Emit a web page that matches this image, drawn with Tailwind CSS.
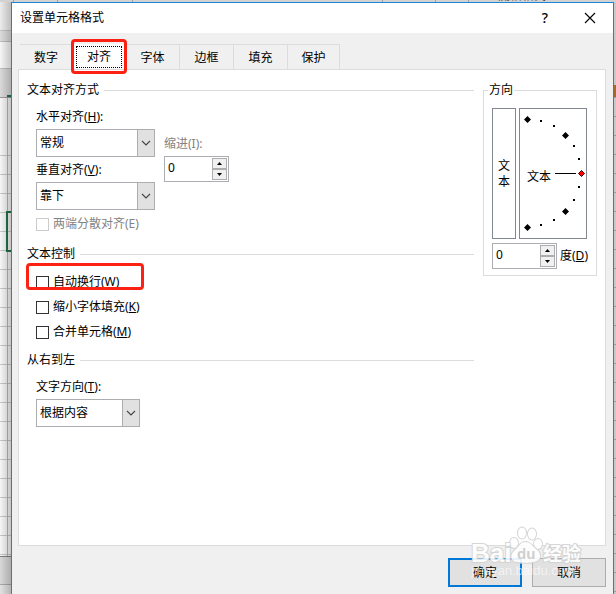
<!DOCTYPE html>
<html lang="zh-CN">
<head>
  <meta charset="UTF-8" />
  <meta name="viewport" content="width=device-width, initial-scale=1.0" />
  <title>设置单元格格式</title>
  <script src="https://cdn.jsdelivr.net/npm/@tailwindcss/browser@4"></script>
</head>
<body class="h-screen overflow-hidden flex flex-col bg-[#d2d2d2] text-black text-[12px] leading-5 font-['Noto_Sans','Noto_Sans_CJK_SC',sans-serif]">

  <!-- Ribbon behind the dialog -->
  <div class="h-0.5 shrink-0 overflow-hidden relative flex">
    <span class="w-3.5 border-r border-gray-400"></span>
    <span class="w-11 border-r border-gray-400"></span>
    <span class="w-[75px] border-r border-gray-400"></span>
    <span class="w-[250px] border-r border-gray-400"></span>
    <span class="w-[53px] border-r border-gray-400"></span>
    <span class="w-[33px] border-r border-gray-400"></span>
    <span class="absolute -bottom-1 left-[498px] text-[#444]">测格格式</span>
  </div>

  <div class="flex-1 min-h-0 flex">
    <!-- Sheet, left side -->
    <div class="w-[11px] shrink-0 relative flex flex-col bg-[#f6f6f6]">
      <div class="h-[29px] bg-[#ececec] border-b border-[#c4c4c4]"></div>
      <div class="h-[11px] bg-[#dcdcdc] border-b border-[#bdbdbd]"></div>
      <div class="h-[27px] border-b border-[#bdbdbd]"></div>
      <div class="h-[29px] bg-[#dadada] border-b border-[#9a9a9a] flex justify-end items-end"><span class="w-1 h-0.5 bg-[#217346]"></span></div>
      <div class="h-[57px] flex"><span class="ml-[7px] w-px bg-[#b5b5b5]"></span></div>
      <div class="h-[401px] bg-[repeating-linear-gradient(to_bottom,#c6c6c6_0px,#c6c6c6_1px,transparent_1px,transparent_19px)] flex"><span class="ml-[7px] w-px bg-[#b5b5b5]"></span></div>
      <div class="h-[29px] bg-[#d8d8d8] border-t border-t-[#808080] border-b border-b-[#aaaaaa]"></div>
      <div class="flex-1 bg-[#e2e2e2]"></div>
      <div class="absolute left-1.5 right-0 top-[209px] h-[41px] border-2 border-r-0 border-[#217346]"></div>
      <div class="absolute inset-0 bg-linear-to-r from-transparent to-black/20"></div>
    </div>

    <!-- Dialog -->
    <main class="flex-1 min-w-0 bg-[#f0f0f0] border border-b-0 border-[#1f83d3] flex flex-col">
      <header class="h-[30px] shrink-0 bg-white flex items-center pl-2 pr-[17px]">
        <h1 class="flex-1">设置单元格格式</h1>
        <button class="w-4 text-[14px] font-medium" aria-label="帮助">?</button>
        <button class="ml-[31px] w-3" aria-label="关闭">
          <svg class="w-3 h-3" viewBox="0 0 12 12" fill="none" stroke="#000" stroke-width="1.1"><path d="M1 1l10 10M11 1L1 11" /></svg>
        </button>
      </header>

      <!-- Tabs -->
      <nav class="mt-[11px] ml-2 flex h-[25px] shrink-0 text-center">
        <button class="w-[52px] pt-px border-t border-[#dcdcdc]">数字</button>
        <button class="w-[54px] bg-white relative">对齐
          <span class="absolute inset-x-1 top-0.5 bottom-px border border-dotted border-black"></span>
          <span class="absolute -inset-x-px -inset-y-[5px] border-3 border-[#fc2112] rounded"></span>
        </button>
        <button class="w-[54px] pt-px border-t border-r border-[#dcdcdc]">字体</button>
        <button class="w-[54px] pt-px border-t border-r border-[#dcdcdc]">边框</button>
        <button class="w-[54px] pt-px border-t border-r border-[#dcdcdc]">填充</button>
        <button class="w-[52px] pt-px border-t border-r border-[#dcdcdc]">保护</button>
      </nav>

      <div class="ml-1.5 mr-[7px] h-[477px] shrink-0 bg-white border border-[#dcdcdc] flex items-start pt-2.5 px-2">
        <form class="flex-1 min-w-0 pr-[9px]">
          <!-- Text alignment -->
          <h2 class="flex items-center gap-[5px]">文本对齐方式<span class="flex-1 border-t border-[#dcdcdc]"></span></h2>
          <div class="mt-[7px] pl-[9px] flex gap-[9px]">
            <div class="w-[119px]">
              <label for="horizontal" class="block">水平对齐(<u>H</u>):</label>
              <div class="relative mt-0.5 h-7">
                <select id="horizontal" class="appearance-none block w-full h-full pl-[3px] border border-[#abadb3] bg-white"><option>常规</option></select>
                <span class="absolute right-0 inset-y-0 w-[18px] bg-[#e1e1e1] border border-[#adadad] flex items-center justify-center pointer-events-none">
                  <svg class="w-2.5 h-1.5" viewBox="0 0 10 6" fill="none" stroke="#444" stroke-width="1.1"><path d="M1 1l4 4 4-4" /></svg>
                </span>
              </div>
              <label for="vertical" class="block mt-[3px]">垂直对齐(<u>V</u>):</label>
              <div class="relative mt-0.5 h-7">
                <select id="vertical" class="appearance-none block w-full h-full pl-[3px] border border-[#abadb3] bg-white"><option>靠下</option></select>
                <span class="absolute right-0 inset-y-0 w-[18px] bg-[#e1e1e1] border border-[#adadad] flex items-center justify-center pointer-events-none">
                  <svg class="w-2.5 h-1.5" viewBox="0 0 10 6" fill="none" stroke="#444" stroke-width="1.1"><path d="M1 1l4 4 4-4" /></svg>
                </span>
              </div>
            </div>
            <div class="pt-[27px]">
              <label for="indent" class="block text-[#838383]">缩进(I):</label>
              <div class="mt-0.5 w-[65px] h-[26px] border border-[#abadb3] flex p-px">
                <input id="indent" type="text" value="0" class="min-w-0 flex-1 pl-0.5 pb-0.5 outline-none" />
                <div class="w-[15px] flex flex-col">
                  <button type="button" aria-label="增加" class="flex-1 bg-[#f0f0f0] border border-[#adadad] flex items-center justify-center"><svg class="w-[5px] h-[3px]" viewBox="0 0 5 3"><path d="M0 3L2.5 0 5 3z" /></svg></button>
                  <button type="button" aria-label="减少" class="flex-1 bg-[#f0f0f0] border border-[#adadad] flex items-center justify-center"><svg class="w-[5px] h-[3px]" viewBox="0 0 5 3"><path d="M0 0L2.5 3 5 0z" /></svg></button>
                </div>
              </div>
            </div>
          </div>
          <label class="mt-1 ml-[9px] flex items-center gap-1 text-[#838383]">
            <input type="checkbox" disabled class="appearance-none w-[13px] h-[13px] border border-[#cccccc] bg-white" />两端分散对齐(E)
          </label>

          <!-- Text control -->
          <h2 class="mt-2.5 flex items-center gap-[5px]">文本控制<span class="flex-1 border-t border-[#dcdcdc]"></span></h2>
          <div class="mt-2 pl-[9px] flex flex-col items-start gap-[5px]">
            <label class="relative flex items-center gap-1">
              <input type="checkbox" class="appearance-none w-[13px] h-[13px] border border-[#333] bg-white" /><span>自动换行(<u>W</u>)</span>
              <span class="absolute -left-2.5 -top-[9px] w-[118px] h-[27px] border-3 border-[#fc2112] rounded"></span>
            </label>
            <label class="flex items-center gap-1">
              <input type="checkbox" class="appearance-none w-[13px] h-[13px] border border-[#333] bg-white" /><span>缩小字体填充(<u>K</u>)</span>
            </label>
            <label class="flex items-center gap-1">
              <input type="checkbox" class="appearance-none w-[13px] h-[13px] border border-[#333] bg-white" /><span>合并单元格(<u>M</u>)</span>
            </label>
          </div>

          <!-- Right to left -->
          <h2 class="mt-2 flex items-center gap-[5px]">从右到左<span class="flex-1 border-t border-[#dcdcdc]"></span></h2>
          <div class="mt-[7px] ml-[9px] w-[104px]">
            <label for="direction" class="block">文字方向(<u>T</u>):</label>
            <div class="relative mt-0.5 h-7">
              <select id="direction" class="appearance-none block w-full h-full pl-[3px] border border-[#abadb3] bg-white"><option>根据内容</option></select>
              <span class="absolute right-0 inset-y-0 w-[18px] bg-[#e1e1e1] border border-[#adadad] flex items-center justify-center pointer-events-none">
                <svg class="w-2.5 h-1.5" viewBox="0 0 10 6" fill="none" stroke="#444" stroke-width="1.1"><path d="M1 1l4 4 4-4" /></svg>
              </span>
            </div>
          </div>
        </form>

        <!-- Orientation -->
        <fieldset class="w-[114px] shrink-0 border border-[#dcdcdc] px-2 pb-1.5">
          <legend class="-ml-1 px-px">方向</legend>
          <div class="mt-2 flex gap-[3px] h-[131px]">
            <button type="button" class="w-6 border border-[#828790] leading-4 flex flex-col items-center justify-center"><span>文</span><span>本</span></button>
            <svg class="w-[68px] h-[131px]" viewBox="0 0 68 131">
              <rect x=".5" y=".5" width="67" height="130" fill="#fff" stroke="#828790" />
              <path d="M36 65.500h21" stroke="#000" />
              <path d="M8.500 8l3.500 3.500-3.500 3.500L5 11.500zM46.500 24l3.500 3.500-3.500 3.500-3.500-3.500zM46.500 100l3.500 3.500-3.500 3.500-3.500-3.500zM8.500 116l3.500 3.500-3.500 3.500-3.500-3.500z" />
              <path d="M21 12h2v2h-2zM34 17h2v2h-2zM54 37h2v2h-2zM59 50h2v2h-2zM59 78h2v2h-2zM54 91h2v2h-2zM34 111h2v2h-2zM21 116h2v2h-2z" />
              <path d="M62.500 62.500l3 3-3 3-3-3z" fill="#f00" stroke="#400" />
              <text x="8" y="73" font-size="12">文本</text>
            </svg>
          </div>
          <div class="mt-1 flex items-center gap-[3px]">
            <div class="w-[65px] h-[26px] border border-[#abadb3] flex p-px">
              <input id="degrees" type="text" value="0" class="min-w-0 flex-1 pl-0.5 pb-0.5 outline-none" />
              <div class="w-[15px] flex flex-col">
                <button type="button" aria-label="增加" class="flex-1 bg-[#f0f0f0] border border-[#adadad] flex items-center justify-center"><svg class="w-[5px] h-[3px]" viewBox="0 0 5 3"><path d="M0 3L2.5 0 5 3z" /></svg></button>
                <button type="button" aria-label="减少" class="flex-1 bg-[#f0f0f0] border border-[#adadad] flex items-center justify-center"><svg class="w-[5px] h-[3px]" viewBox="0 0 5 3"><path d="M0 0L2.5 3 5 0z" /></svg></button>
              </div>
            </div>
            <label for="degrees" class="whitespace-nowrap">度(<u>D</u>)</label>
          </div>
        </fieldset>
      </div>

      <footer class="relative mt-3 pr-[7px] flex justify-end gap-2.5">
        <button class="w-[74px] h-[29px] bg-[#e1e1e1] border-2 border-[#0078d7]">确定</button>
        <button class="w-[74px] h-[29px] bg-[#e1e1e1] border border-[#adadad]">取消</button>

        <!-- Watermark -->
        <svg class="absolute right-[30px] -top-8 w-[116px] h-[62px] pointer-events-none" viewBox="0 0 116 62" font-family="Liberation Sans, Noto Sans CJK SC, sans-serif">
          <g fill="#fff" stroke="#d2d2d2" stroke-width="2" paint-order="stroke" opacity=".9">
            <ellipse cx="47" cy="17" rx="4" ry="5" />
            <ellipse cx="55" cy="7" rx="4" ry="5.500" />
            <ellipse cx="65" cy="8" rx="4" ry="5.500" />
            <ellipse cx="71" cy="18" rx="4" ry="5" />
            <path d="M58 16c-5 0-6 5-10 8-6 5-4 12 2 12 5 1 12 1 17 0 7-1 8-8 3-12-5-4-6-8-12-8z" />
            <text x="4" y="36" font-size="26" font-weight="bold">Bai</text>
            <text x="76" y="35" font-size="19" font-weight="bold">经验</text>
          </g>
          <text x="50" y="33" font-size="15" font-weight="bold" fill="#cfcfcf">du</text>
          <text x="4" y="49" font-size="13" fill="#fff" fill-opacity=".6">jingyan.baidu.com</text>
        </svg>
      </footer>
    </main>

    <!-- Sheet, right side -->
    <div class="w-0.5 shrink-0 flex flex-col bg-[#c9c9c9]">
      <div class="h-[83px]"></div>
      <div class="h-3 bg-[#a66a2c]"></div>
      <div class="flex-1 bg-[repeating-linear-gradient(to_bottom,#9f9f9f_0px,#9f9f9f_1px,transparent_1px,transparent_19px)]"></div>
    </div>
  </div>
</body>
</html>
